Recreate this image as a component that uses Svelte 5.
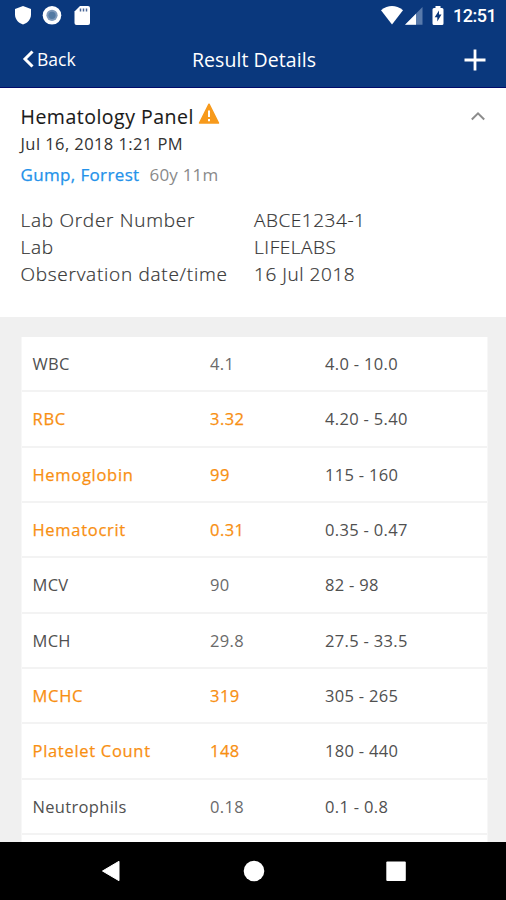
<script>
  const info = [
    ['Lab Order Number', 'ABCE1234-1'],
    ['Lab', 'LIFELABS'],
    ['Observation date/time', '16 Jul 2018'],
  ];
  const results = [
    { name: 'WBC', value: '4.1', range: '4.0 - 10.0' },
    { name: 'RBC', value: '3.32', range: '4.20 - 5.40', flag: true },
    { name: 'Hemoglobin', value: '99', range: '115 - 160', flag: true },
    { name: 'Hematocrit', value: '0.31', range: '0.35 - 0.47', flag: true },
    { name: 'MCV', value: '90', range: '82 - 98' },
    { name: 'MCH', value: '29.8', range: '27.5 - 33.5' },
    { name: 'MCHC', value: '319', range: '305 - 265', flag: true },
    { name: 'Platelet Count', value: '148', range: '180 - 440', flag: true },
    { name: 'Neutrophils', value: '0.18', range: '0.1 - 0.8' },
    { name: '', value: '', range: '' },
  ];
</script>

<div class="screen">
  <header>
    <div class="status">
      <svg class="left" width="110" height="30" viewBox="0 0 110 30">
        <path d="M23 6l8 3v5.500c0 4.700-3.300 8.500-8 10-4.700-1.500-8-5.300-8-10V9z" fill="#fff" />
        <circle cx="52" cy="15.300" r="9.300" fill="#fff" />
        <circle cx="52" cy="15.300" r="5.600" fill="#7f9abb" />
        <circle cx="52" cy="15.300" r="3.600" fill="#537aa3" />
        <path d="M80 6h8q2 0 2 2v15q0 2-2 2H76.500q-2 0-2-2V11.500z" fill="#fff" />
        <path d="M80.500 8.500v3m3-3v3m3-3v3" stroke="#4a6696" stroke-width="1.500" />
      </svg>
      <svg width="70" height="30" viewBox="0 0 70 30">
        <path d="M1 10.200Q12 2 23 10.200L12 24.600z" fill="#fff" />
        <path d="M42.500 7v17.800H25z" fill="#587aab" />
        <path d="M36 13.700v11.100H25z" fill="#fff" />
        <path d="M55.500 6h5v2H62q1.500 0 1.500 1.500v14Q63.500 25 62 25H54q-1.500 0-1.500-1.500v-14Q52.500 8 54 8h1.500z" fill="#fff" />
        <path d="M59 10.500l-4.300 6.700h2.600v4.300l4.200-6.900h-2.500z" fill="#0a387d" />
      </svg>
      <span class="clock">12:51</span>
    </div>
    <nav>
      <div class="back">
        <svg width="12" height="20" viewBox="0 0 12 20"><path d="M10.500 2.500L3 10l7.500 7.500" fill="none" stroke="#fff" stroke-width="3" /></svg>
        <span>Back</span>
      </div>
      <h1>Result Details</h1>
      <svg class="plus" width="22" height="22" viewBox="0 0 22 22"><path d="M11 .5v21M.5 11h21" stroke="#fff" stroke-width="2.800" /></svg>
    </nav>
  </header>

  <section class="panel">
    <div class="heading">
      <h2>Hematology Panel</h2>
      <svg class="warn" width="22" height="22" viewBox="0 0 22 22">
        <path d="M11 1.200L20.500 20h-19z" fill="#f79a1c" stroke="#f79a1c" stroke-width="1.500" stroke-linejoin="round" />
        <path d="M11 7.500v6.500M11 16v2.200" stroke="#fff" stroke-width="2" />
      </svg>
      <svg class="chevron" width="16" height="10" viewBox="0 0 16 10"><path d="M1.800 8.500L8 2.300l6.200 6.200" fill="none" stroke="#8c8c8c" stroke-width="2" /></svg>
    </div>
    <div class="date">Jul 16, 2018 1:21 PM</div>
    <div class="patient"><span class="name">Gump, Forrest</span><span class="age">60y 11m</span></div>
    <dl>
      {#each info as [label, value]}
        <div><dt>{label}</dt><dd>{value}</dd></div>
      {/each}
    </dl>
  </section>

  <main>
    <div class="table">
      {#each results as r}
        <div class="row" class:flag={r.flag}>
          <span class="test">{r.name}</span>
          <span class="value">{r.value}</span>
          <span class="range">{r.range}</span>
        </div>
      {/each}
    </div>
  </main>

  <footer>
    <svg width="20" height="24" viewBox="0 0 20 24"><path d="M1.500 12L18 2.300v19.400z" fill="#fff" stroke="#fff" stroke-linejoin="round" /></svg>
    <svg width="22" height="24" viewBox="0 0 22 24"><circle cx="11" cy="12" r="10.300" fill="#fff" /></svg>
    <svg width="20" height="24" viewBox="0 0 20 24"><rect x=".3" y="2.500" width="19.500" height="19.500" rx="1" fill="#fff" /></svg>
  </footer>
</div>

<style>
  .screen { width: 506px; height: 900px; display: flex; flex-direction: column; overflow: hidden; background: #fff; font-family: "Open Sans", "Noto Sans", sans-serif; color: #333; }
  h1, h2, dl, dd { margin: 0; font-weight: 400; }
  svg { display: block; flex: none; }
  span, h1, h2, dt, dd { white-space: nowrap; }
  header { height: 88px; box-sizing: border-box; flex: none; background: #0a387d; border-bottom: 1px solid #020c6b; color: #fff; }
  .status { height: 30px; display: flex; padding-right: 9px; }
  .left { margin-right: auto; }
  .clock { font: 500 18px/32px Roboto, sans-serif; letter-spacing: -.5px; width: 44px; margin-left: 3px; }
  nav { height: 57px; display: grid; grid-template-columns: 1fr auto 1fr; align-items: center; padding: 2px 20px 0 22px; box-sizing: border-box; }
  .back { display: flex; align-items: center; gap: 3px; font-size: 17.500px; line-height: 24px; padding-bottom: 2px; }
  h1 { font-size: 19.500px; line-height: 28px; letter-spacing: .07px; }
  .plus { justify-self: end; }
  .panel { height: 229px; flex: none; box-sizing: border-box; padding: 15px 20px 0 20.500px; }
  .heading { display: flex; height: 27px; }
  h2 { font-size: 19.500px; line-height: 28px; letter-spacing: .5px; color: #1a1a1a; -webkit-text-stroke: .1px #1a1a1a; }
  .warn { margin: 0 0 0 4px; }
  .chevron { margin: 8px 0 0 auto; }
  .date { font-size: 16.500px; line-height: 28px; letter-spacing: .42px; }
  .patient { display: flex; gap: 10px; margin-top: 3px; font-size: 17px; line-height: 28px; }
  .name { color: #2492ea; letter-spacing: .36px; -webkit-text-stroke: .25px #2492ea; }
  .age { color: #8a8a8a; letter-spacing: .2px; }
  dl { margin-top: 18px; font-size: 19px; line-height: 27.200px; font-weight: 300; color: #333; -webkit-text-stroke: .2px #333; }
  dl div { display: grid; grid-template-columns: 233.500px 1fr; }
  dt { letter-spacing: .73px; }
  dd { font-weight: 300; letter-spacing: .55px; }
  main { flex: 1; min-height: 0; background: #f0f0f0; padding: 20px 18px 0 21px; overflow: hidden; }
  .table { background: #fff; border: 1px solid #f7f7f7; border-width: 0 1px; }
  .row { box-sizing: border-box; height: 55.350px; display: grid; grid-template-columns: 177.500px 115px 1fr; padding: 0 0 0 10.500px; border-bottom: 2px solid #f3f3f3; font-size: 16.500px; line-height: 53px; letter-spacing: .32px; color: #505050; }
  .value { color: #6a6a6a; }
  .flag .test, .flag .value { color: #f88f12; -webkit-text-stroke: .25px #f88f12; }
  .flag .test { letter-spacing: .7px; }
  .flag .value { letter-spacing: .45px; }
  footer { height: 58px; flex: none; background: #000; display: flex; align-items: center; justify-content: space-between; padding: 0 100px 0 101px; box-sizing: border-box; }
</style>
